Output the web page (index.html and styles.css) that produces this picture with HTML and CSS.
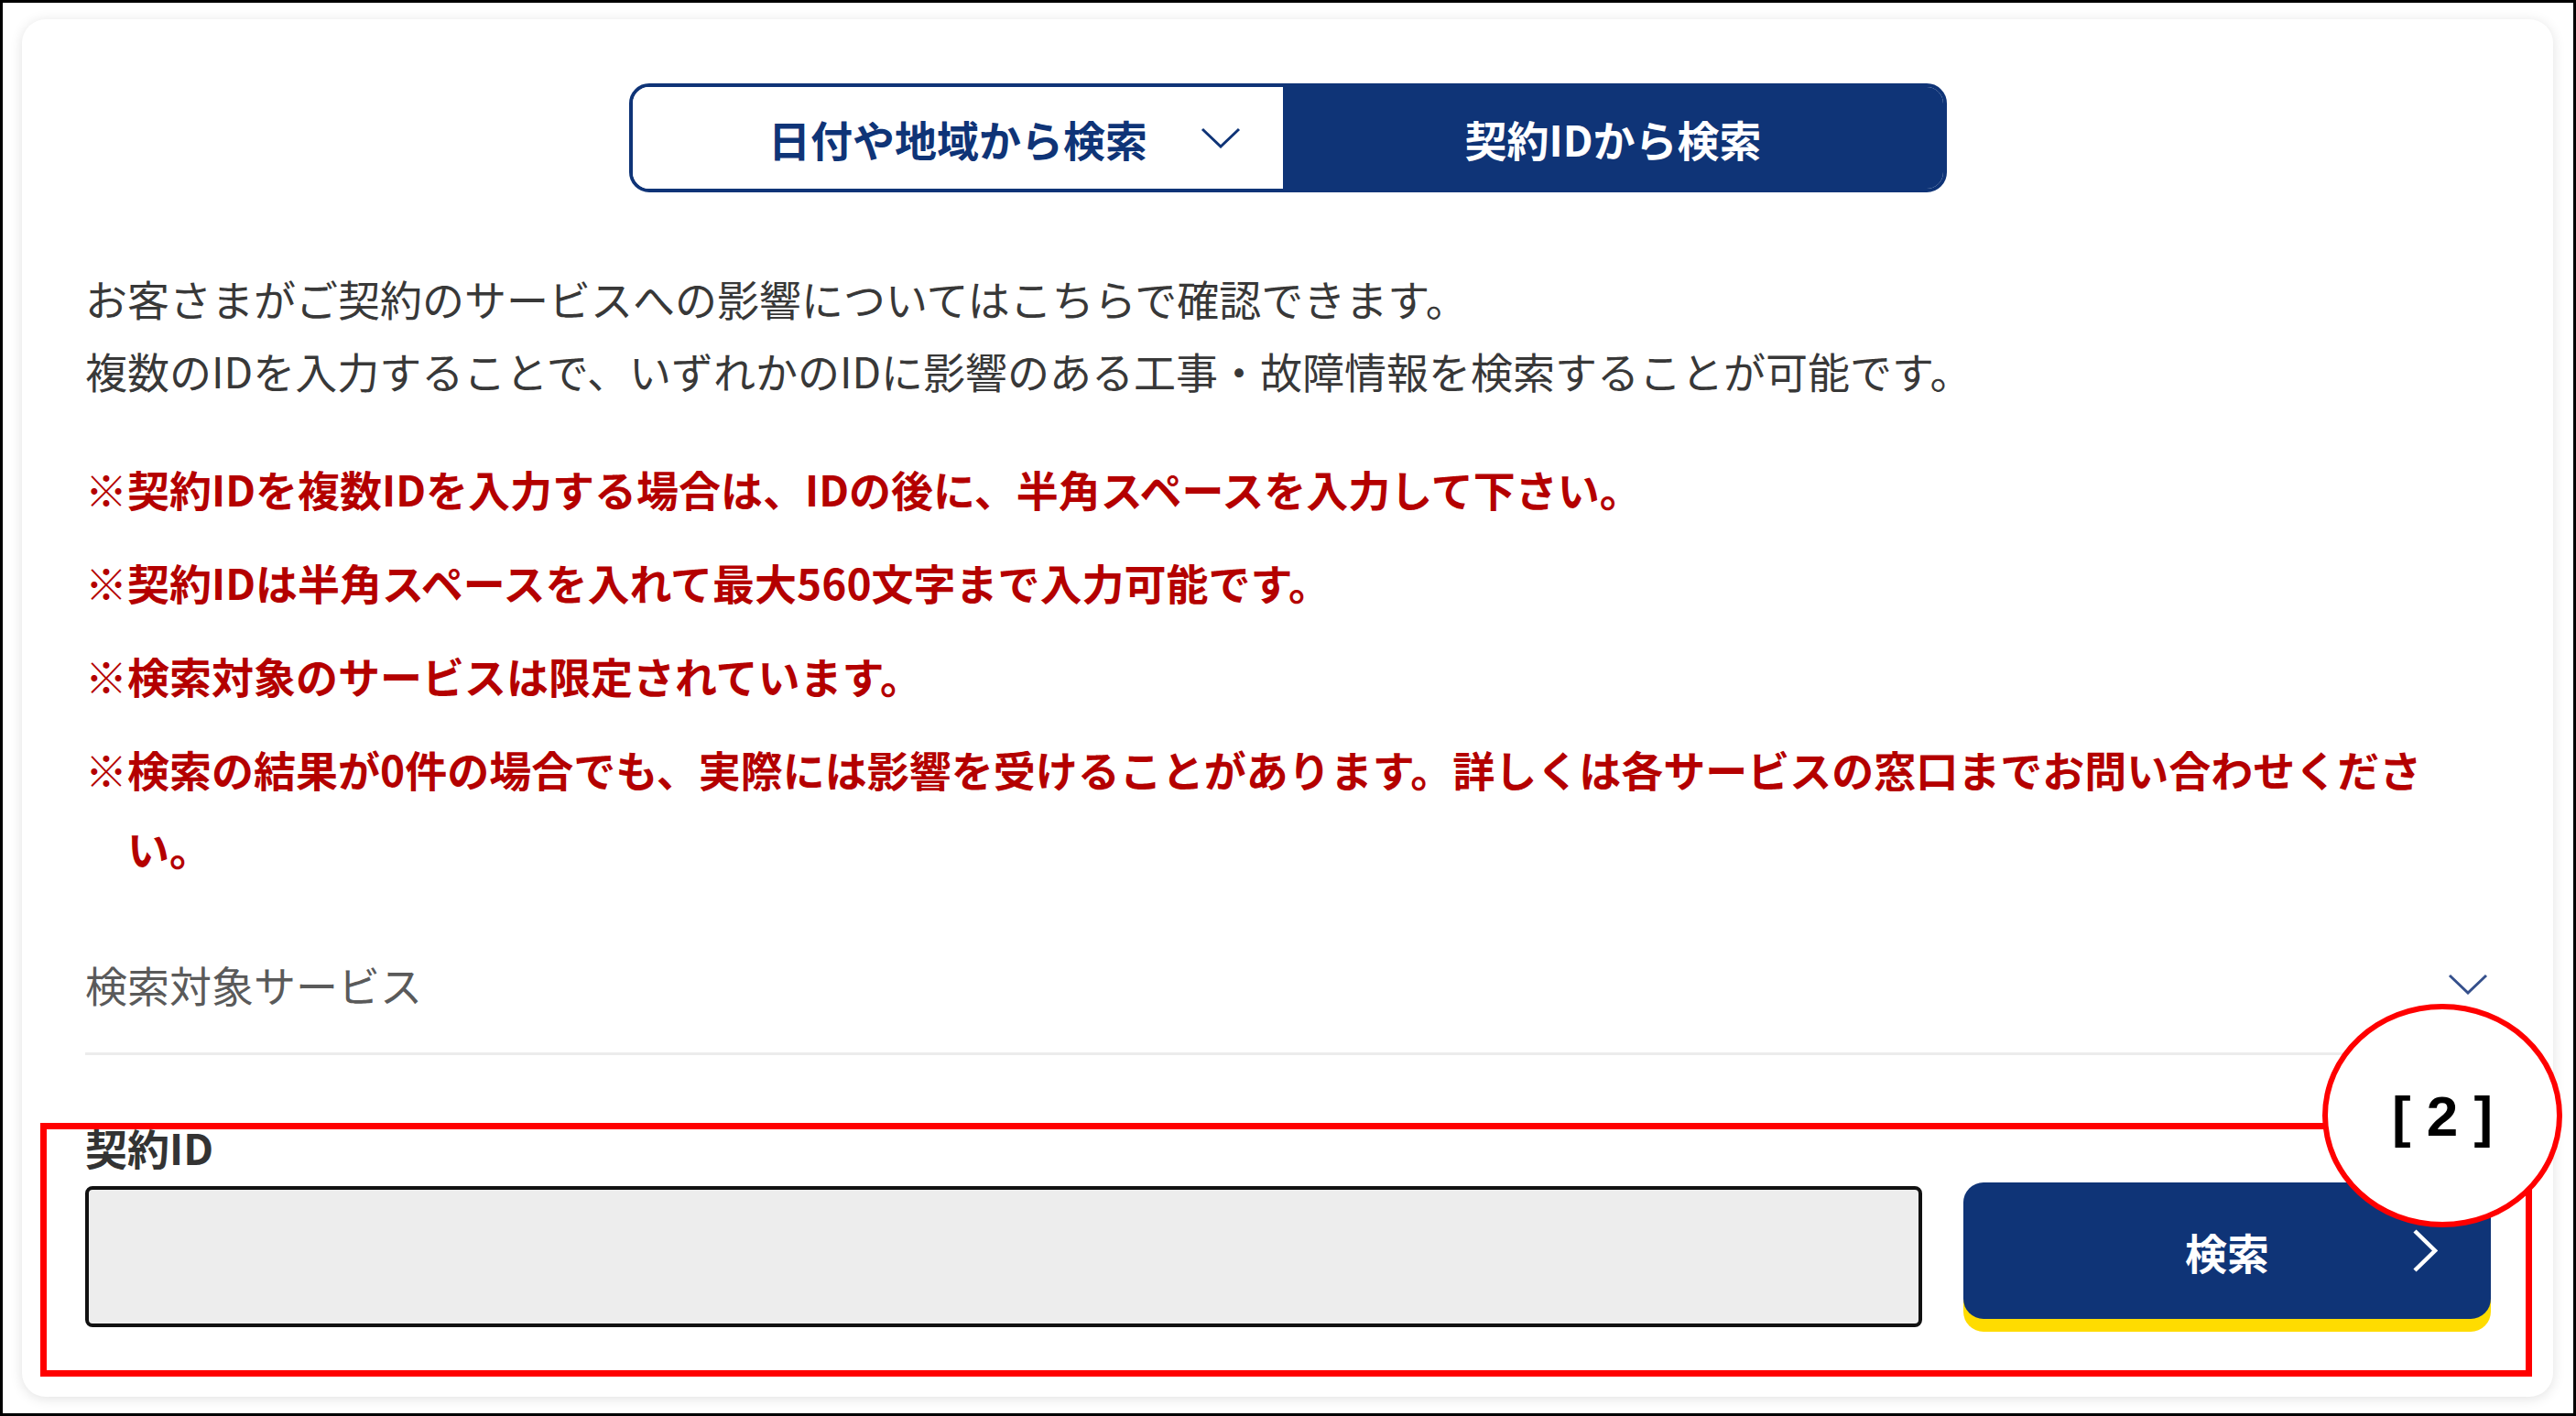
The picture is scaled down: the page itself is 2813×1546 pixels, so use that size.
FILE: index.html
```html
<!DOCTYPE html>
<html lang="ja">
<head>
    <meta charset="UTF-8">
    <meta name="viewport" content="width=device-width, initial-scale=1.0">
    <title>契約IDから検索</title>
    <link rel="stylesheet" href="styles.css">
</head>
<body>
    <div class="frame">
        <div class="card">
            <!-- search mode tabs -->
            <div class="search-tabs">
                <button type="button" class="tab tab-area">
                    <span></span>
                    <span class="tab-label">日付や地域から検索</span>
                    <svg class="tab-chevron" width="44" height="23" viewBox="0 0 44 23">
                        <polyline points="2,2 22,21 42,2" fill="none" stroke="currentColor" stroke-width="3"/>
                    </svg>
                </button>
                <button type="button" class="tab tab-active">契約IDから検索</button>
            </div>

            <p class="lead">
                お客さまがご契約のサービスへの影響についてはこちらで確認できます。<br>
                複数のIDを入力することで、いずれかのIDに影響のある工事・故障情報を検索することが可能です。
            </p>

            <ul class="notes">
                <li>※契約IDを複数IDを入力する場合は、IDの後に、半角スペースを入力して下さい。</li>
                <li>※契約IDは半角スペースを入れて最大560文字まで入力可能です。</li>
                <li>※検索対象のサービスは限定されています。</li>
                <li>※検索の結果が0件の場合でも、実際には影響を受けることがあります。詳しくは各サービスの窓口までお問い合わせください。</li>
            </ul>

            <div class="service-select">
                <span>検索対象サービス</span>
                <svg width="44" height="23" viewBox="0 0 44 23">
                    <polyline points="2,2 22,21 42,2" fill="none" stroke="currentColor" stroke-width="3"/>
                </svg>
            </div>

            <div class="id-field">
                <label class="field-label" for="contract_id">契約ID</label>
                <div class="id-row">
                    <input type="text" id="contract_id" class="id-input">
                    <button type="button" class="search-btn">
                        <span></span>
                        <span>検索</span>
                        <svg class="btn-chevron" width="28" height="47" viewBox="0 0 28 47">
                            <polyline points="3,2 25,23.5 3,45" fill="none" stroke="currentColor" stroke-width="4.5"/>
                        </svg>
                    </button>
                </div>
            </div>
        </div>

        <!-- annotation marks -->
        <div class="mark-box"></div>
        <div class="mark-circle">[ 2 ]</div>
    </div>
</body>
</html>
```

FILE: styles.css
```css
/* Page frame */
body {
    margin: 0;
    background-color: #fff;
    font-family: "Noto Sans CJK JP", "Noto Sans", sans-serif;
    color: #333;
}

.frame {
    position: relative;
    box-sizing: border-box;
    height: 100vh;
    border: 3px solid #000;
    padding: 18px 22px 18px 21px;
}

.card {
    background-color: #fff;
    border-radius: 26px;
    box-shadow: 0 2px 14px rgba(0, 0, 0, 0.12);
    padding: 70px 68px 76px 69px;
}

/* Tabs */
.search-tabs {
    display: grid;
    grid-template-columns: 710px 1fr;
    width: 1439px;
    height: 119px;
    box-sizing: border-box;
    margin: 0 auto;
    border: 4px solid #0f3477;
    border-radius: 22px;
    overflow: hidden;
}

.tab {
    border: none;
    margin: 0;
    padding: 0;
    font-family: inherit;
    font-size: 46px;
    font-weight: bold;
    cursor: pointer;
}

.tab-area {
    display: grid;
    grid-template-columns: 1fr auto 1fr;
    align-items: center;
    background-color: #fff;
    color: #0f3477;
}

.tab-chevron {
    justify-self: end;
    margin-right: 46px;
}

.tab-active {
    background-color: #0f3477;
    color: #fff;
}

/* Texts */
.lead {
    margin: 76px 0 0;
    font-size: 46px;
    line-height: 79px;
    color: #383838;
}

.notes {
    list-style: none;
    margin: 46px 0 0;
    padding: 0;
}

.notes li {
    padding-left: 1em;
    text-indent: -1em;
    font-size: 46px;
    line-height: 86px;
    font-weight: bold;
    color: #b40000;
}

.notes li + li {
    margin-top: 16px;
}

/* Service select */
.service-select {
    display: flex;
    justify-content: space-between;
    align-items: center;
    margin-top: 67px;
    padding-bottom: 35px;
    border-bottom: 3px solid #ececec;
    font-size: 46px;
    line-height: 79px;
    color: #5a5a5a;
}

.service-select svg {
    color: #35508c;
    margin-right: 3px;
}

/* Contract ID */
.id-field {
    margin-top: 70px;
}

.field-label {
    display: block;
    font-size: 46px;
    line-height: 60px;
    font-weight: bold;
    color: #333;
}

.id-row {
    display: flex;
    align-items: flex-start;
    gap: 45px;
    margin-top: 9px;
}

.id-input {
    flex: 1;
    box-sizing: border-box;
    height: 154px;
    margin: 4px 0 0;
    border: 4px solid #111;
    border-radius: 8px;
    background-color: #ededed;
}

.search-btn {
    display: grid;
    grid-template-columns: 1fr auto 1fr;
    align-items: center;
    width: 576px;
    height: 149px;
    padding: 0;
    border: none;
    border-radius: 22px;
    background-color: #0f3477;
    box-shadow: 0 14px 0 #ffdc00;
    color: #fff;
    font-family: inherit;
    font-size: 46px;
    font-weight: bold;
    cursor: pointer;
}

.btn-chevron {
    justify-self: end;
    margin-right: 58px;
}

/* Annotation overlay */
.mark-box {
    position: absolute;
    left: 41px;
    top: 1223px;
    width: 2721px;
    height: 277px;
    box-sizing: border-box;
    border: 7px solid #ff0000;
}

.mark-circle {
    position: absolute;
    left: 2533px;
    top: 1093px;
    width: 262px;
    height: 244px;
    box-sizing: border-box;
    border: 6px solid #ff0000;
    border-radius: 50%;
    background-color: #fff;
    display: flex;
    justify-content: center;
    align-items: center;
    font-family: "Liberation Sans", Arial, sans-serif;
    font-size: 62px;
    font-weight: bold;
    color: #000;
}
```
